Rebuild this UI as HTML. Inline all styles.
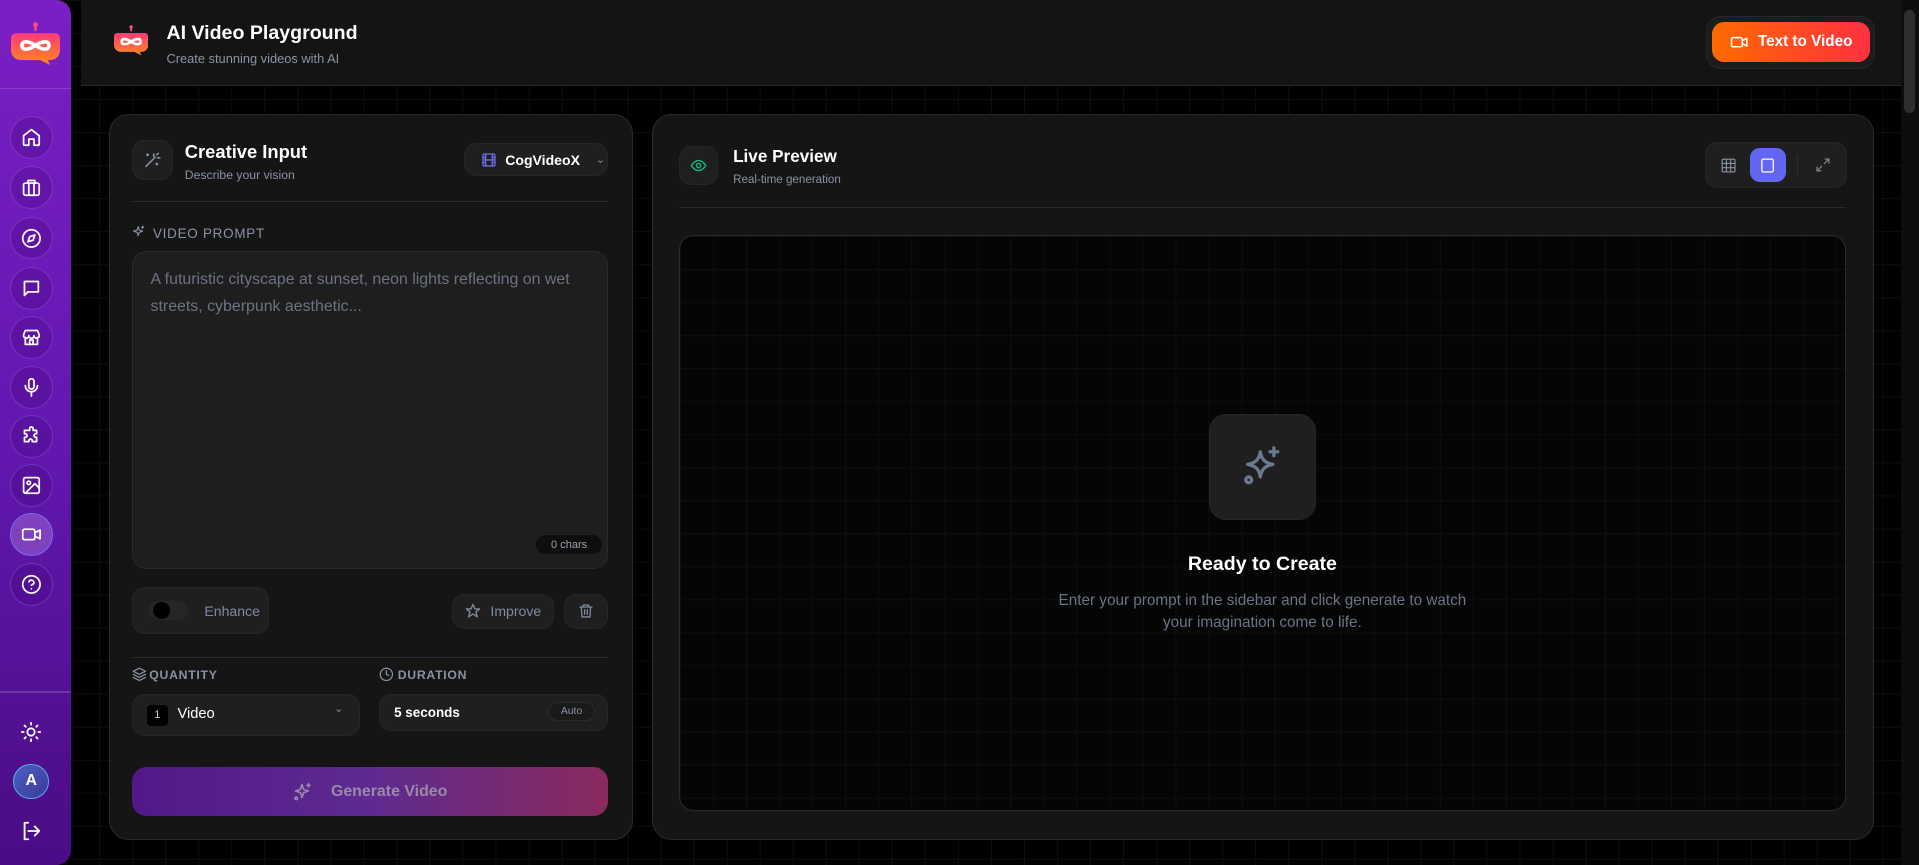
<!DOCTYPE html>
<html><head><meta charset="utf-8"><style>
*{box-sizing:border-box;margin:0;padding:0}
html,body{width:1919px;height:865px;overflow:hidden;background:#000}
#root{position:relative;width:1568px;height:707px;zoom:1.22385;font-family:"Liberation Sans",sans-serif;color:#fff;
background-color:#000;background-image:linear-gradient(#0e0e0e 1px,transparent 1px),linear-gradient(90deg,#0e0e0e 1px,transparent 1px);background-size:27px 27px;overflow:hidden}
.abs{position:absolute}
.side{left:0;top:0;width:58px;height:707px;background:linear-gradient(180deg,#7a1fc4 0%,#6318b0 50%,#4a0c85 100%);border-radius:0 12px 12px 0}
.nav{position:absolute;left:8px;width:35px;height:35px;border-radius:50%;border:1px solid rgba(170,110,240,.35);background:rgba(60,0,110,.25);display:flex;align-items:center;justify-content:center}
.nav svg{width:17px;height:17px;fill:none;stroke:#fff;stroke-width:2;stroke-linecap:round;stroke-linejoin:round}
.panel{background:#151515;border:1px solid #2a2a2a;border-radius:16px}
.box{background:#1f1f1f;border:1px solid #262626}
.ic{fill:none;stroke-linecap:round;stroke-linejoin:round;stroke-width:2}
.lbl{font-size:10.5px;color:#8a93a3;letter-spacing:.6px;font-weight:bold}
</style></head><body><div id="root">

<div class="abs side">
  <svg class="abs" style="left:9px;top:17px" width="40" height="36" viewBox="0 0 40 36"><defs><linearGradient id="lg" x1="0" y1="0" x2="0" y2="1"><stop offset="0" stop-color="#ff3a7a"/><stop offset="1" stop-color="#ff8a1a"/></linearGradient></defs><line x1="20" y1="2" x2="20" y2="8" stroke="#ff4d7d" stroke-width="2"/><circle cx="20" cy="3" r="2" fill="#ff4d7d"/><path d="M4 10h32a4 4 0 0 1 4 4v10a8 8 0 0 1-8 8h-2l2 4-8-4H8a8 8 0 0 1-8-8V14a4 4 0 0 1 4-4z" fill="url(#lg)"/><path d="M9 20c0-4 5-4 11 0s11 4 11 0-5-4-11 0-11 4-11 0z" fill="none" stroke="#fff" stroke-width="3"/></svg>
  <div class="abs" style="left:0;top:72px;width:58px;height:1px;background:rgba(255,255,255,.15)"></div>
  <div class="nav" style="top:95px"><svg viewBox="0 0 24 24"><path d="M3 10l9-7 9 7v10a1 1 0 0 1-1 1h-5v-7H9v7H4a1 1 0 0 1-1-1z"/></svg></div>
  <div class="nav" style="top:136px"><svg viewBox="0 0 24 24"><rect x="3" y="7" width="18" height="14" rx="2"/><path d="M8 7V4h8v3M9 7v14M15 7v14"/></svg></div>
  <div class="nav" style="top:177px"><svg viewBox="0 0 24 24"><circle cx="12" cy="12" r="10"/><path d="M16 8l-2 6-6 2 2-6z"/></svg></div>
  <div class="nav" style="top:218px"><svg viewBox="0 0 24 24"><path d="M4 4h16v12H8l-4 4z"/></svg></div>
  <div class="nav" style="top:258px"><svg viewBox="0 0 24 24"><path d="M3 9l2-5h14l2 5v1a3 3 0 0 1-6 0 3 3 0 0 1-6 0 3 3 0 0 1-6 0zM5 12v8h14v-8M10 20v-5h4v5"/></svg></div>
  <div class="nav" style="top:299px"><svg viewBox="0 0 24 24"><rect x="9" y="2" width="6" height="12" rx="3"/><path d="M5 10a7 7 0 0 0 14 0M12 17v5"/></svg></div>
  <div class="nav" style="top:339px"><svg viewBox="0 0 24 24"><path d="M10 3a2 2 0 0 1 4 0v2h4v4h-1a2 2 0 0 0 0 4h1v5h-5v-1a2 2 0 0 0-4 0v1H4v-5h1a2 2 0 0 0 0-4H4V5h6z"/></svg></div>
  <div class="nav" style="top:379px"><svg viewBox="0 0 24 24"><rect x="3" y="3" width="18" height="18" rx="2"/><circle cx="9" cy="9" r="2"/><path d="M21 15l-5-5L5 21"/></svg></div>
  <div class="nav" style="top:419px;background:rgba(170,120,220,.45);border-color:#7c6cf0"><svg viewBox="0 0 24 24"><rect x="2" y="6" width="14" height="12" rx="2"/><path d="M16 10l6-3v10l-6-3"/></svg></div>
  <div class="nav" style="top:460px"><svg viewBox="0 0 24 24"><circle cx="12" cy="12" r="10"/><path d="M9.1 9a3 3 0 0 1 5.8 1c0 2-3 3-3 3M12 17h.01"/></svg></div>
  <div class="abs" style="left:0;top:565px;width:58px;height:1px;background:rgba(255,255,255,.15)"></div>
  <svg class="abs ic" style="left:16px;top:589px;stroke:#fff" width="18" height="18" viewBox="0 0 24 24"><circle cx="12" cy="12" r="4"/><path d="M12 2v2M12 20v2M4.9 4.9l1.4 1.4M17.7 17.7l1.4 1.4M2 12h2M20 12h2M4.9 19.1l1.4-1.4M17.7 6.3l1.4-1.4"/></svg>
  <div class="abs" style="left:11px;top:624px;width:29px;height:29px;border-radius:50%;background:linear-gradient(135deg,#4a5fc0,#3a3a9a);border:1px solid #58b0e0;display:flex;align-items:center;justify-content:center;font-weight:bold;font-size:13px">A</div>
  <svg class="abs ic" style="left:16px;top:670px;stroke:#fff" width="18" height="18" viewBox="0 0 24 24"><path d="M9 21H5V3h4M16 17l5-5-5-5M21 12H9"/></svg>
</div>

<div class="abs" style="left:1553px;top:0;width:15px;height:707px;background:#0d0d0d"></div>
<div class="abs" style="left:1556px;top:8px;width:9px;height:84px;border-radius:5px;background:#2e2e2e"></div>

<div class="abs" style="left:66px;top:0;width:1487px;height:70px;background:#141414;border-bottom:1px solid #2a2a2a"></div>
<svg class="abs" style="left:93px;top:20px" width="28" height="26" viewBox="0 0 40 36"><line x1="20" y1="2" x2="20" y2="8" stroke="#ff4d7d" stroke-width="2"/><circle cx="20" cy="3" r="2" fill="#ff4d7d"/><path d="M4 10h32a4 4 0 0 1 4 4v10a8 8 0 0 1-8 8h-2l2 4-8-4H8a8 8 0 0 1-8-8V14a4 4 0 0 1 4-4z" fill="url(#lg)"/><path d="M9 20c0-4 5-4 11 0s11 4 11 0-5-4-11 0-11 4-11 0z" fill="none" stroke="#fff" stroke-width="3"/></svg>
<div class="abs" style="left:136px;top:18px;font-size:16px;font-weight:bold">AI Video Playground</div>
<div class="abs" style="left:136px;top:42px;font-size:10.5px;color:#8a93a3">Create stunning videos with AI</div>
<div class="abs" style="left:1394px;top:13px;width:138px;height:43px;border-radius:12px;background:#1c1c1c;border:1px solid #262626"></div>
<div class="abs" style="left:1399px;top:18px;width:129px;height:33px;border-radius:10px;background:linear-gradient(90deg,#ff6a00,#ff3040);display:flex;align-items:center;justify-content:center;font-size:12.5px;font-weight:bold;gap:8px">
<svg class="ic" style="stroke:#fff" width="15" height="15" viewBox="0 0 24 24"><rect x="2" y="6" width="14" height="12" rx="2"/><path d="M16 10l6-3v10l-6-3"/></svg>Text to Video</div>

<!-- left panel -->
<div class="abs panel" style="left:89px;top:93px;width:428px;height:593px"></div>
<div class="abs box" style="left:108px;top:114px;width:33px;height:33px;border-radius:10px;display:flex;align-items:center;justify-content:center"><svg class="ic" style="stroke:#8a93a3" width="15" height="15" viewBox="0 0 24 24"><path d="M4 20L16 8M14 4v3M19 9h3M20 3l-2 2M6 4v2M5 5h2M18 16v2M17 17h2"/></svg></div>
<div class="abs" style="left:151px;top:115px;font-size:15px;font-weight:bold">Creative Input</div>
<div class="abs" style="left:151px;top:137px;font-size:10px;color:#8a93a3">Describe your vision</div>
<div class="abs box" style="left:379px;top:117px;width:118px;height:27px;border-radius:10px;display:flex;align-items:center;padding-left:13px;font-size:11.5px;font-weight:bold;gap:7px">
<svg class="ic" style="stroke:#6b6ef5" width="13" height="13" viewBox="0 0 24 24"><rect x="3" y="3" width="18" height="18" rx="2"/><path d="M7 3v18M17 3v18M3 8h4M3 16h4M17 8h4M17 16h4M3 12h18"/></svg>CogVideoX<span style="color:#8a93a3;font-weight:normal;margin-left:6px;font-size:9px">&#8964;</span></div>
<div class="abs" style="left:108px;top:164px;width:389px;height:1px;background:#2a2a2a"></div>
<svg class="abs ic" style="left:108px;top:184px;stroke:#8a93a3" width="11" height="11" viewBox="0 0 24 24"><path d="M11 3l2 6 6 2-6 2-2 6-2-6-6-2 6-2zM19 2v4M17 4h4"/></svg>
<div class="abs lbl" style="left:125px;top:185px;font-weight:normal;font-size:11px">VIDEO PROMPT</div>
<div class="abs" style="left:108px;top:205px;width:389px;height:260px;background:#1e1e1e;border:1px solid #2a2a2a;border-radius:12px"></div>
<div class="abs" style="left:123px;top:218px;width:360px;font-size:13px;line-height:22px;color:#6b7280">A futuristic cityscape at sunset, neon lights reflecting on wet streets, cyberpunk aesthetic...</div>
<div class="abs" style="left:438px;top:437px;width:54px;height:16px;border-radius:8px;background:#0e0e0e;font-size:9px;color:#9ca3af;display:flex;align-items:center;justify-content:center">0 chars</div>
<div class="abs box" style="left:108px;top:480px;width:112px;height:38px;border-radius:10px"></div>
<div class="abs" style="left:122px;top:491px;width:32px;height:16px;border-radius:8px;background:#262626"></div>
<div class="abs" style="left:125px;top:492px;width:14px;height:14px;border-radius:50%;background:#000"></div>
<div class="abs" style="left:167px;top:493px;font-size:11.5px;color:#7d8aa0">Enhance</div>
<div class="abs box" style="left:369px;top:485px;width:84px;height:29px;border-radius:10px;display:flex;align-items:center;justify-content:center;gap:8px;font-size:11.5px;color:#7d8aa0">
<svg class="ic" style="stroke:#7d8aa0" width="13" height="13" viewBox="0 0 24 24"><path d="M12 2l3 7h7l-5.5 4.5 2 7.5-6.5-4.5-6.5 4.5 2-7.5L2 9h7z"/></svg>Improve</div>
<div class="abs box" style="left:461px;top:485px;width:36px;height:29px;border-radius:10px;display:flex;align-items:center;justify-content:center">
<svg class="ic" style="stroke:#7d8aa0" width="13" height="13" viewBox="0 0 24 24"><path d="M3 6h18M8 6V3h8v3M5 6l1 15h12l1-15M10 10v7M14 10v7"/></svg></div>
<div class="abs" style="left:108px;top:537px;width:389px;height:1px;background:#2a2a2a"></div>
<svg class="abs ic" style="left:108px;top:545px;stroke:#8a93a3" width="12" height="12" viewBox="0 0 24 24"><path d="M12 2l10 5-10 5-10-5zM2 12l10 5 10-5M2 17l10 5 10-5"/></svg>
<div class="abs lbl" style="left:122px;top:546px;font-size:10px">QUANTITY</div>
<svg class="abs ic" style="left:310px;top:545px;stroke:#8a93a3" width="12" height="12" viewBox="0 0 24 24"><circle cx="12" cy="12" r="10"/><path d="M12 6v6l4 2"/></svg>
<div class="abs lbl" style="left:325px;top:546px;font-size:10px">DURATION</div>
<div class="abs box" style="left:108px;top:567px;width:186px;height:34px;border-radius:10px"></div>
<div class="abs" style="left:120px;top:576px;width:17px;height:17px;border-radius:3px;background:#000;font-size:9px;color:#ccc;display:flex;align-items:center;justify-content:center">1</div>
<div class="abs" style="left:145px;top:577px;font-size:12px">Video</div>
<div class="abs" style="left:273px;top:574px;font-size:9px;color:#8a93a3">&#8964;</div>
<div class="abs box" style="left:310px;top:567px;width:187px;height:30px;border-radius:10px"></div>
<div class="abs" style="left:322px;top:576px;font-size:11px;font-weight:bold">5 seconds</div>
<div class="abs" style="left:448px;top:574px;width:38px;height:15px;border-radius:8px;border:1px solid #2a2a2a;background:#1a1a1a;font-size:8.5px;color:#8a93a3;display:flex;align-items:center;justify-content:center">Auto</div>
<div class="abs" style="left:108px;top:627px;width:389px;height:40px;border-radius:12px;background:linear-gradient(90deg,#521888 0%,#5e2a90 50%,#8a2a5e 100%);display:flex;align-items:center;justify-content:center;gap:15px;font-size:13px;font-weight:bold;color:#9a8aa8">
<svg class="ic" style="stroke:#9a8aa8" width="16" height="16" viewBox="0 0 24 24"><path d="M11 3l2 6 6 2-6 2-2 6-2-6-6-2 6-2zM19 2v4M17 4h4"/><circle cx="4" cy="20" r="1.5"/></svg>Generate Video</div>

<!-- right panel -->
<div class="abs panel" style="left:533px;top:93px;width:998px;height:593px"></div>
<div class="abs box" style="left:555px;top:119px;width:32px;height:32px;border-radius:10px;display:flex;align-items:center;justify-content:center"><svg class="ic" style="stroke:#10b981" width="14" height="14" viewBox="0 0 24 24"><path d="M2 12s4-7 10-7 10 7 10 7-4 7-10 7S2 12 2 12z"/><circle cx="12" cy="12" r="3"/></svg></div>
<div class="abs" style="left:599px;top:119px;font-size:14px;font-weight:bold">Live Preview</div>
<div class="abs" style="left:599px;top:141px;font-size:9.5px;color:#8a93a3">Real-time generation</div>
<div class="abs box" style="left:1393px;top:116px;width:116px;height:38px;border-radius:10px"></div>
<svg class="abs ic" style="left:1405px;top:128px;stroke:#8a93a3;stroke-width:1.6" width="14" height="14" viewBox="0 0 24 24"><rect x="3" y="3" width="18" height="18" rx="2"/><path d="M3 9h18M3 15h18M9 3v18M15 3v18"/></svg>
<div class="abs" style="left:1430px;top:121px;width:29px;height:28px;border-radius:8px;background:#6366f1;display:flex;align-items:center;justify-content:center"><svg class="ic" style="stroke:#fff;stroke-width:1.8" width="14" height="14" viewBox="0 0 24 24"><rect x="4" y="3" width="16" height="18" rx="2"/></svg></div>
<div class="abs" style="left:1468px;top:127px;width:1px;height:16px;background:#2e2e2e"></div>
<svg class="abs ic" style="left:1483px;top:128px;stroke:#8a93a3;stroke-width:1.6" width="13" height="13" viewBox="0 0 24 24"><path d="M15 3h6v6M21 3l-7 7M9 21H3v-6M3 21l7-7"/></svg>
<div class="abs" style="left:555px;top:169px;width:953px;height:1px;background:#2a2a2a"></div>
<div class="abs" style="left:555px;top:192px;width:953px;height:471px;border:1px solid #2a2a2a;border-radius:12px;background-color:#050505;background-image:linear-gradient(#0e0e0e 1px,transparent 1px),linear-gradient(90deg,#0e0e0e 1px,transparent 1px);background-size:27px 27px"></div>
<div class="abs" style="left:988px;top:338px;width:87px;height:87px;border-radius:14px;background:#1f1f1f;border:1px solid #262626;display:flex;align-items:center;justify-content:center">
<svg class="ic" style="stroke:#6b7a90;stroke-width:1.7" width="38" height="38" viewBox="0 0 24 24"><path d="M11 4c.6 4 2.5 5.8 6.5 6.5-4 .7-5.9 2.5-6.5 6.5-.6-4-2.5-5.8-6.5-6.5 4-.7 5.9-2.5 6.5-6.5zM18 2v4M16 4h4"/><circle cx="5" cy="18.5" r="1.5"/></svg></div>
<div class="abs" style="left:555px;top:452px;width:953px;text-align:center;font-size:16px;font-weight:bold">Ready to Create</div>
<div class="abs" style="left:555px;top:482px;width:953px;text-align:center;font-size:12.5px;line-height:18px;color:#6b7585">Enter your prompt in the sidebar and click generate to watch<br>your imagination come to life.</div>

</div></body></html>
